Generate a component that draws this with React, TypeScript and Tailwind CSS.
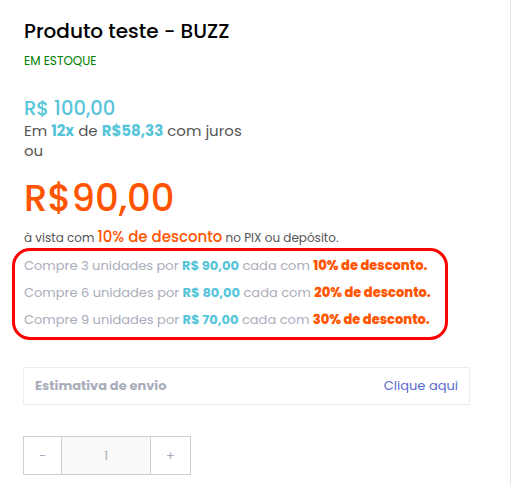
import React from "react";

const font = { fontFamily: "Poppins, 'Open Sans', sans-serif" };

function DiscountLine({ qty, price, pct }: { qty: number; price: string; pct: number }) {
  return (
    <div className="leading-[27px] h-[27px] text-[13px] text-[#a9adbb] whitespace-nowrap">
      Compre {qty} unidades por <span className="font-bold text-[#56c5da]">R$ {price}</span> cada com{" "}
      <span className="font-extrabold text-[#ff5500]">{pct}% de desconto.</span>
    </div>
  );
}

export default function App() {
  return (
    <div className="w-[513px] h-[486px] bg-white overflow-hidden" style={font}>
      <div className="w-[511px] h-[486px] border-r border-[#e6e6e6] pl-[24px] pt-[19px]">
        <div className="text-[20px] leading-[24px] font-medium text-black">Produto teste - BUZZ</div>
        <div className="mt-[10px] text-[12px] leading-[16px] text-[#008000]">EM ESTOQUE</div>
        <div className="mt-[28px] text-[19.5px] leading-[24px] font-medium text-[#56c5da]">R$ 100,00</div>
        <div className="text-[15px] leading-[20px] text-[#555]">
          Em <span className="font-bold text-[#56c5da]">12x</span> de{" "}
          <span className="font-bold text-[#56c5da]">R$58,33</span> com juros
        </div>
        <div className="text-[15px] leading-[20px] text-[#555]">ou</div>
        <div className="mt-[15px] text-[37px] leading-[44px] font-medium text-[#ff5500]">R$90,00</div>
        <div className="mt-[7px] text-[12px] leading-[20px] h-[20px] text-[#555] whitespace-nowrap">
          à vista com <span className="text-[15px] font-medium text-[#ff5500]">10% de desconto</span> no PIX ou
          depósito.
        </div>
        <div className="mt-[1px] ml-[-12px] w-[436px] h-[92px] border-[3px] border-[#ff0000] rounded-[18px] pl-[9px] pt-[0.5px]">
          <DiscountLine qty={3} price="90,00" pct={10} />
          <DiscountLine qty={6} price="80,00" pct={20} />
          <DiscountLine qty={9} price="70,00" pct={30} />
        </div>
        <div className="mt-[27px] ml-[-1px] w-[447px] h-[38px] border border-[#ececec] flex items-center justify-between px-[11px]">
          <span className="text-[13px] font-bold text-[#a9adbb]">Estimativa de envio</span>
          <span className="text-[13px] text-[#5a6ad0]">Clique aqui</span>
        </div>
        <div className="mt-[31px] ml-[-1px] flex w-[168px] h-[39px] border border-[#cfcfcf]">
          <div className="w-[38px] flex items-center justify-center text-[13px] text-[#aab] border-r border-[#cfcfcf]">-</div>
          <div className="w-[89px] flex items-center justify-center text-[13px] text-[#aab] bg-[#f9f9f9] border-r border-[#cfcfcf]">1</div>
          <div className="flex-1 flex items-center justify-center text-[13px] text-[#aab]">+</div>
        </div>
      </div>
    </div>
  );
}
